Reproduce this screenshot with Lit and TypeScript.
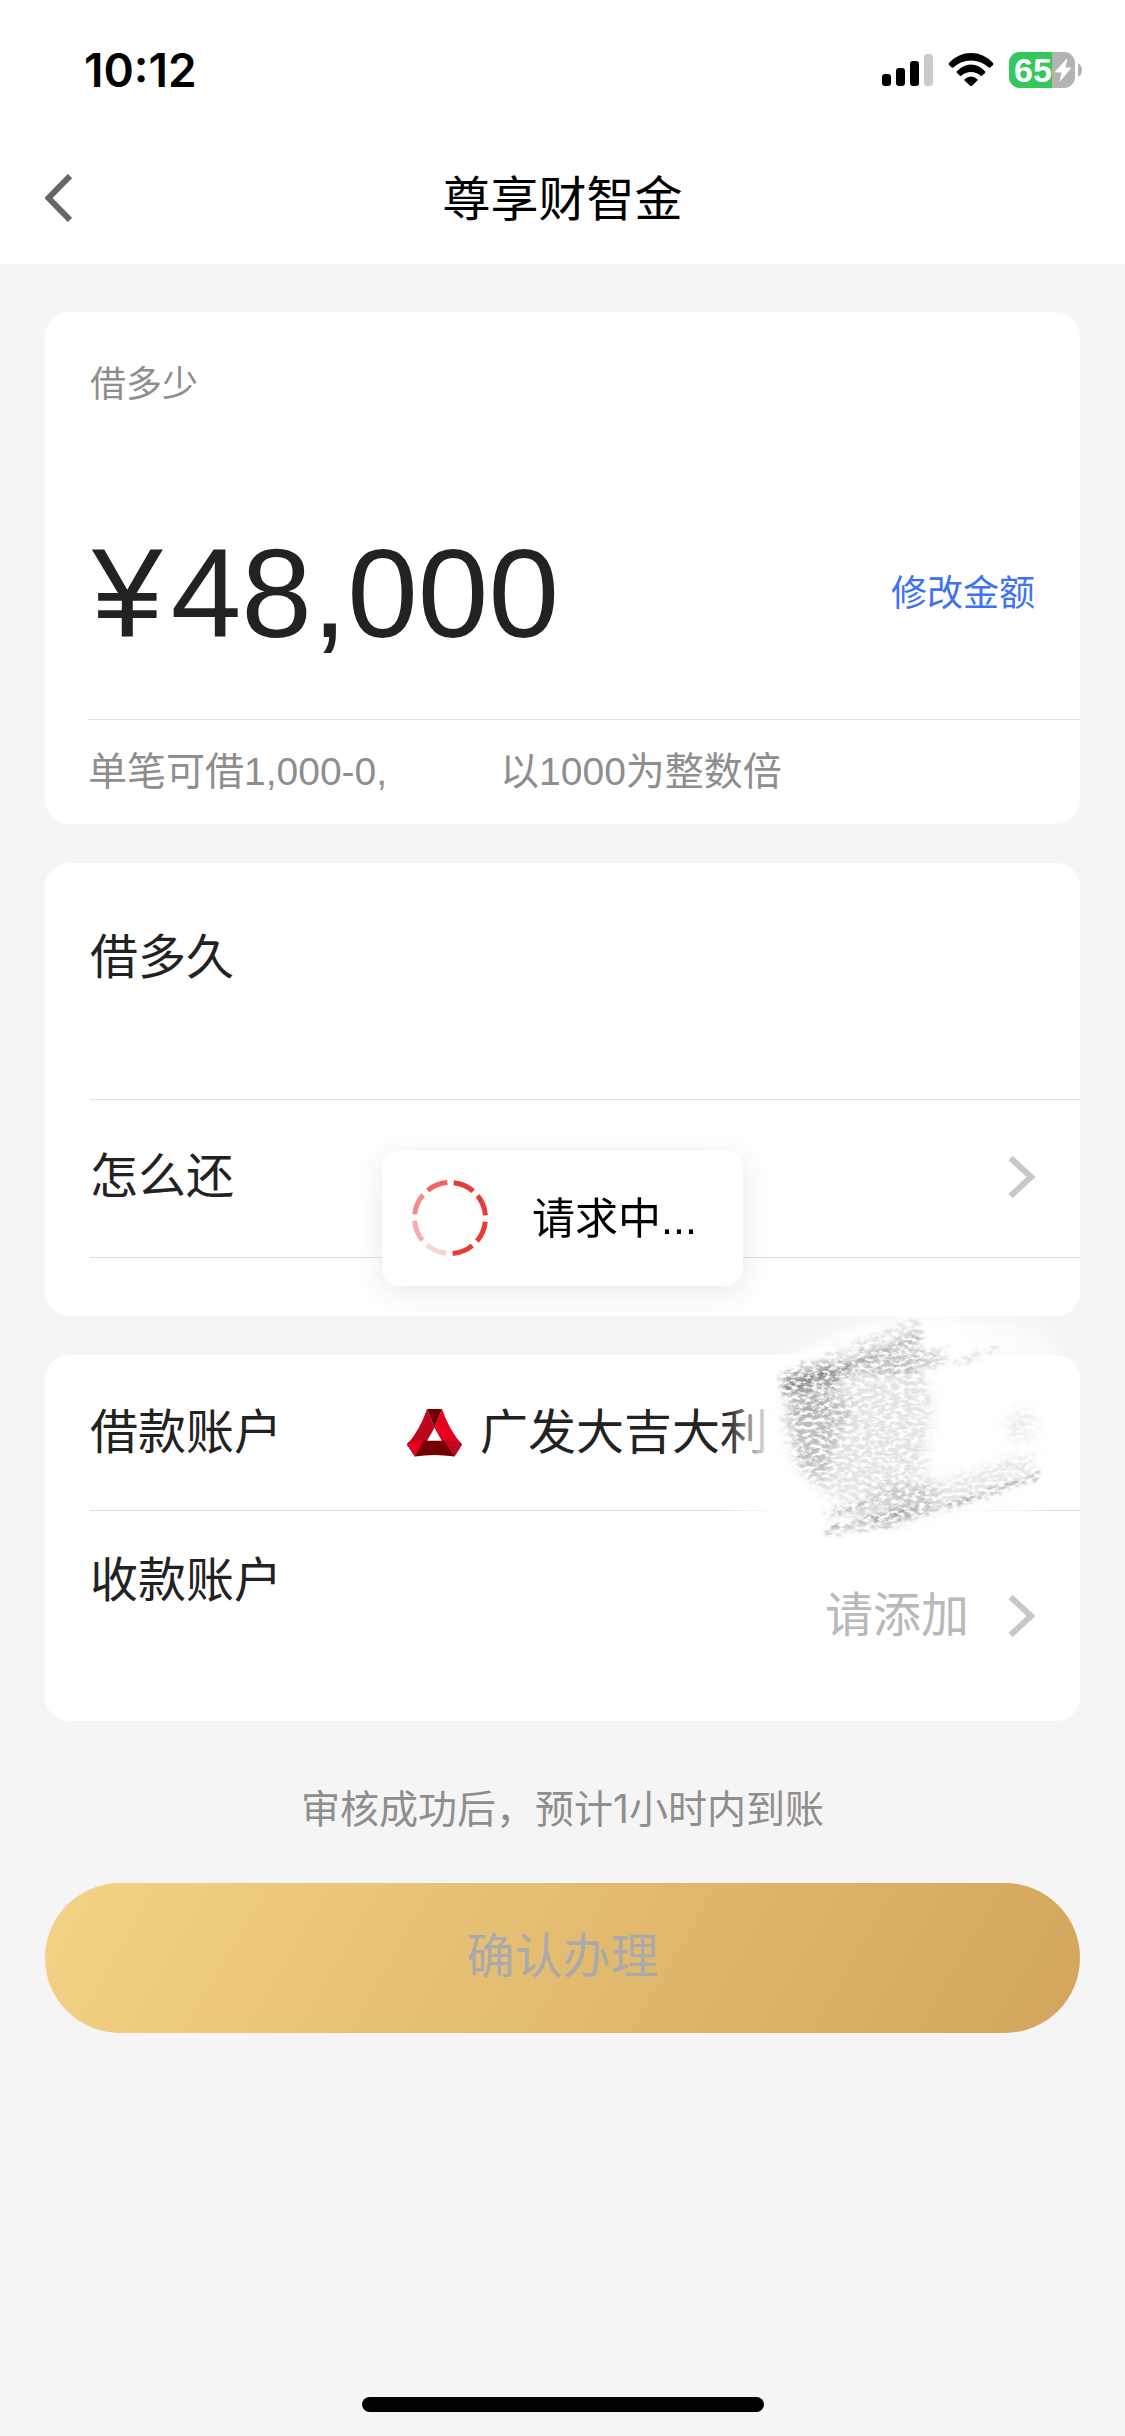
import { LitElement, html, css, svg } from "lit";
import { customElement, property } from "lit/decorators.js";

const shared = css`
  *, *::before, *::after { box-sizing: border-box; }
  button {
    font: inherit; color: inherit; background: none; border: 0;
    margin: 0; padding: 0; text-align: left; cursor: pointer;
  }
  svg { display: block; flex: none; }
`;

@customElement("status-bar")
export class StatusBar extends LitElement {
  @property() time = "";
  @property({ type: Number }) charge = 0;

  static styles = [shared, css`
    :host {
      display: flex; align-items: center; justify-content: space-between;
      height: 132px; padding: 7px 42px 0 84px;
    }
    .time { font: 600 46px/60px Inter, sans-serif; color: #000; }
    .icons { display: flex; align-items: center; gap: 15px; }
    .battery { overflow: visible; }
    .level { font: 700 34px "Liberation Sans", sans-serif; fill: #fff; }
  `];

  render() {
    const split = Math.round((66 * this.charge) / 100);
    return html`
      <span class="time">${this.time}</span>
      <div class="icons">
        <svg width="51" height="36" viewBox="0 0 51 36" aria-label="信号">
          <rect x="0" y="22" width="9" height="12" rx="3"/>
          <rect x="14" y="16" width="9" height="18" rx="3"/>
          <rect x="28" y="9" width="9" height="25" rx="3"/>
          <rect x="42" y="2" width="9" height="32" rx="3" fill="#cbcbcb"/>
        </svg>
        <svg width="46" height="36" viewBox="0 0 46 36" aria-label="无线网络">
          <path d="M1.200 10.800Q0 12 1.200 13.200L3.800 15.400Q4.700 16 5.600 15.200Q13 8.400 23 8.400Q33 8.400 40.400 15.200Q41.300 16 42.200 15.400L44.800 13.200Q46 12 44.800 10.800Q35.600 1 23 1Q10.400 1 1.200 10.800Z"/>
          <path d="M9 19.200Q8 20 9 21L12 23.700Q12.800 24.200 13.600 23.500Q17.600 20 23 20Q28.400 20 32.400 23.500Q33.200 24.200 34 23.700L37 21Q38 20 37 19.200Q31 12.500 23 12.500Q15 12.500 9 19.200Z"/>
          <path d="M16.700 27.200Q16 28 16.800 28.800L22 33.700Q23 34.500 24 33.700L29.200 28.800Q30 28 29.300 27.200Q26.600 24.500 23 24.500Q19.400 24.500 16.700 27.200Z"/>
        </svg>
        <svg class="battery" width="74" height="36" viewBox="0 0 74 36" aria-label="电量">
          <defs><clipPath id="body"><rect width="66" height="36" rx="11"/></clipPath></defs>
          <g clip-path="url(#body)">
            <rect width="66" height="36" fill="#b3b3b3"/>
            <rect width=${split} height="36" fill="#34c759"/>
          </g>
          <path d="M69 11.500Q73 13 73 18Q73 23 69 24.500Z" fill="#b3b3b3"/>
          <text class="level" x="5" y="30">${this.charge}</text>
          <path d="M58.500 6L46 19.500Q45.500 20.500 46.500 20.500L52.500 20.500L50.500 30L62 16.500Q62.500 15.500 61.500 15.500L56.500 15.500Z" fill="#fff"/>
        </svg>
      </div>
    `;
  }
}

const chevron = html`
  <svg width="27" height="42" viewBox="0 0 27 42" aria-hidden="true">
    <path d="M2.500 2L23 21L2.500 40" fill="none" stroke="#c7c7cc" stroke-width="6"/>
  </svg>`;

const dashColors = ["#ea3a36", "#ea3a36", "#ea3a36", "#ea3a36", "#fad3d3", "#f6adad", "#f28c8a", "#ee6561"];

@customElement("loading-toast")
export class LoadingToast extends LitElement {
  @property() message = "";

  static styles = [shared, css`
    :host {
      position: fixed; inset: 0; display: flex; align-items: center;
      justify-content: center; pointer-events: none; z-index: 2;
    }
    .box {
      display: flex; align-items: center; gap: 44px; padding: 29px 46px 30px 30px;
      border-radius: 18px; background: #fff; box-shadow: 0 6px 30px rgba(0, 0, 0, 0.09);
    }
    .text { padding-top: 2px; font-size: 43px; line-height: 60px; color: #000; }
  `];

  render() {
    return html`
      <div class="box" role="status">
        <svg width="76" height="76" viewBox="-38 -38 76 76" aria-hidden="true">
          ${dashColors.map((color, i) => svg`
            <path d="M2.500 -35.400A35.500 35.500 0 0 1 22.200 -27.700" fill="none"
              stroke=${color} stroke-width="5" transform="rotate(${i * 45 + 2})"/>`)}
        </svg>
        <span class="text">${this.message}</span>
      </div>
    `;
  }
}

@customElement("chalk-smudge")
export class ChalkSmudge extends LitElement {
  static styles = [shared, css`:host { display: block; }`];

  render() {
    return html`
      <svg width="400" height="250" viewBox="-150 0 1200 750" aria-hidden="true">
        <defs>
          <filter id="soft" x="-20%" y="-20%" width="140%" height="140%">
            <feGaussianBlur stdDeviation="22"/>
          </filter>
          <filter id="chalk" filterUnits="userSpaceOnUse" x="0" y="0" width="1000" height="750">
            <feTurbulence type="fractalNoise" baseFrequency="0.050 0.090" numOctaves="4" seed="7" result="n"/>
            <feDisplacementMap in="SourceGraphic" in2="n" scale="50" xChannelSelector="R" yChannelSelector="G" result="d"/>
            <feGaussianBlur in="d" stdDeviation="3" result="b"/>
            <feColorMatrix in="n" type="matrix" values="0 0 0 0 0  0 0 0 0 0  0 0 0 0 0  0 0 3.200 0 -0.950" result="grain"/>
            <feComposite in="b" in2="grain" operator="in"/>
          </filter>
          <filter id="fade" x="-30%" y="-30%" width="160%" height="160%">
            <feGaussianBlur stdDeviation="16"/>
          </filter>
          <linearGradient id="veil" x1="0" x2="1" y1="0" y2="0">
            <stop offset="0" stop-color="#fff" stop-opacity="0"/>
            <stop offset="0.100" stop-color="#fff" stop-opacity="0.800"/>
            <stop offset="0.180" stop-color="#fff"/>
            <stop offset="0.700" stop-color="#fff"/>
            <stop offset="1" stop-color="#fff" stop-opacity="0.600"/>
          </linearGradient>
        </defs>
        <g filter="url(#soft)">
          <path d="M-40 320L120 180L300 90L520 40L900 90L930 150L870 640L240 690L-50 660Z" fill="url(#veil)"/>
        </g>
        <g filter="url(#chalk)">
          <g filter="url(#fade)">
            <path d="M115 240L330 170L520 150L560 300L540 520L420 570L260 600L160 500Z" fill="#888" fill-opacity="0.240"/>
            <path d="M115 320L330 300L280 400L230 560L150 480Z" fill="#777" fill-opacity="0.340"/>
            <path d="M120 240L300 190L250 330L150 350Z" fill="#666" fill-opacity="0.340"/>
            <path d="M420 560L600 540L860 460L870 530L620 620L430 670Z" fill="#888" fill-opacity="0.220"/>
            <path d="M780 350L860 325L875 410L790 430Z" fill="#999" fill-opacity="0.200"/>
            <path d="M260 640L400 560L560 540L580 610L440 680Z" fill="#777" fill-opacity="0.260"/>
          </g>
          <path d="M95 225L180 185L300 175L520 85L535 110L520 150L600 150L605 195L450 225L330 220L240 270L120 290Z" fill="#777" fill-opacity="0.300"/>
          <path d="M180 185L520 50L535 80L300 170Z" fill="#888" fill-opacity="0.200"/>
          <path d="M110 240L240 190L280 215L130 275Z" fill="#555" fill-opacity="0.260"/>
          <path d="M235 640L400 585L400 610L260 655Z" fill="#777" fill-opacity="0.320"/>
          <path d="M235 690L400 645L560 610L620 620L430 680L240 710Z" fill="#777" fill-opacity="0.260"/>
          <path d="M600 612L880 520L885 532L610 625Z" fill="#777" fill-opacity="0.500"/>
          <path d="M620 180L760 135L765 150L640 195Z" fill="#999" fill-opacity="0.280"/>
          <path d="M110 270L260 215M270 215L520 110M245 690L480 630" fill="none" stroke="#555" stroke-opacity="0.300" stroke-width="12"/>
        </g>
      </svg>
    `;
  }
}

@customElement("app-root")
export class AppRoot extends LitElement {
  static styles = [shared, css`
    :host {
      display: flex; flex-direction: column; min-height: 100vh;
      background: #f5f5f5; color: #222;
      font-family: "Liberation Sans", "Noto Sans CJK SC", sans-serif;
    }
    .top { background: #fff; }
    .nav {
      display: grid; grid-template-columns: 1fr auto 1fr; align-items: center;
      height: 132px; padding: 0 45px;
    }
    .title { margin: 0; padding-top: 3px; font-size: 48px; line-height: 66px; font-weight: 400; color: #000; }
    .main { display: flex; flex-direction: column; gap: 39px; padding: 48px 45px 0; }
    .card { position: relative; background: #fff; border-radius: 24px; }
    .caption { margin: 0; padding: 46px 45px 0; font-size: 36px; line-height: 54px; font-weight: 400; color: #8e8e8e; }
    .amount-row {
      display: flex; align-items: center; justify-content: space-between;
      padding: 106px 45px 51px 47px;
    }
    .amount { display: flex; gap: 8px; font-size: 127px; line-height: 150px; }
    .edit { padding-top: 2px; font-size: 36px; line-height: 54px; color: #3d71f7; }
    .hint {
      display: flex; gap: 113px; margin: 0 0 0 43px; padding: 22px 0;
      border-top: 1px solid #e2e2e2; font-size: 39px; line-height: 60px; color: #8e8e8e;
    }
    .row {
      display: flex; align-items: center; width: calc(100% - 45px);
      margin-left: 45px; padding: 45px 45px 44px 0; font-size: 48px; line-height: 66px;
    }
    .row + .row, .foot { border-top: 1px solid #e2e2e2; }
    .term { padding: 62px 45px 108px 0; }
    .method { justify-content: space-between; padding: 44px 45px 47px 0; }
    .foot { height: 59px; margin-left: 45px; }
    .label { flex: none; }
    .account { display: flex; align-items: center; gap: 18px; margin-left: 125px; }
    .payee { padding: 37px 45px 37px 0; }
    .payee .label { align-self: flex-start; padding-bottom: 70px; }
    .value { display: flex; align-items: center; gap: 39px; margin-left: auto; color: #b9b9b9; }
    .smudge { position: absolute; top: -55px; right: -15px; pointer-events: none; }
    .note {
      margin: 19px 0 5px; text-align: center; font-size: 39px; line-height: 60px; color: #8e8e8e;
      font-family: Inter, "Noto Sans CJK SC", sans-serif;
    }
    .confirm {
      padding: 41px 42px 43px; border-radius: 75px; text-align: center; font-size: 48px; line-height: 66px;
      color: #aaaaac; background: linear-gradient(120deg, #f3d386, #d2a55b);
    }
    .home { width: 402px; height: 15px; margin: auto auto 24px; border-radius: 8px; background: #000; }
  `];

  render() {
    return html`
      <header class="top">
        <status-bar time="10:12" charge="65"></status-bar>
        <nav class="nav">
          <button aria-label="返回">
            <svg width="27" height="48" viewBox="0 0 27 48" aria-hidden="true">
              <path d="M25 2L3.500 24L25 46" fill="none" stroke="#666" stroke-width="6"/>
            </svg>
          </button>
          <h1 class="title">尊享财智金</h1>
        </nav>
      </header>
      <main class="main">
        <section class="card">
          <h2 class="caption">借多少</h2>
          <div class="amount-row">
            <div class="amount"><span>¥</span><span>48,000</span></div>
            <button class="edit">修改金额</button>
          </div>
          <div class="hint"><span>单笔可借1,000-0,</span><span>以1000为整数倍</span></div>
        </section>
        <section class="card">
          <div class="row term"><span class="label">借多久</span></div>
          <button class="row method"><span class="label">怎么还</span>${chevron}</button>
          <div class="foot"></div>
        </section>
        <section class="card">
          <div class="row">
            <span class="label">借款账户</span>
            <span class="account">
              <svg width="55" height="48" viewBox="0 0 55 48" aria-hidden="true">
                <path d="M20 0L27.500 19Q22 31 8 47.500L0 35.500Q13 21 20 0Z" fill="#c0081c"/>
                <path d="M35 0L27.500 19Q33 32 47.500 47.500L55 35.500Q42 21 35 0Z" fill="#e6001f"/>
                <path d="M0 35.500L1.500 33Q10 31.500 18 31.500L8 47.500Z" fill="#e6001f"/>
                <path d="M20 0L35 0L27.500 19Z" fill="#750003"/>
                <path d="M16 31.500L38 31.500L47.500 47.500Q27 44.500 8 47.500Z" fill="#750003"/>
                <path d="M37 31.500Q46 31.500 53 33L55 35.500L47.500 47.500Z" fill="#c0081c"/>
                <path d="M8 47.500L0 35.500L1.500 33L16 32Z" fill="#e6001f"/>
                <path d="M27.500 19L34.500 31.500L20.500 31.500Z" fill="#fff"/>
              </svg>
              <span>广发大吉大利</span>
            </span>
          </div>
          <button class="row payee">
            <span class="label">收款账户</span>
            <span class="value">请添加${chevron}</span>
          </button>
          <chalk-smudge class="smudge"></chalk-smudge>
        </section>
        <p class="note">审核成功后，预计1小时内到账</p>
        <button class="confirm">确认办理</button>
      </main>
      <div class="home"></div>
      <loading-toast message="请求中..."></loading-toast>
    `;
  }
}
